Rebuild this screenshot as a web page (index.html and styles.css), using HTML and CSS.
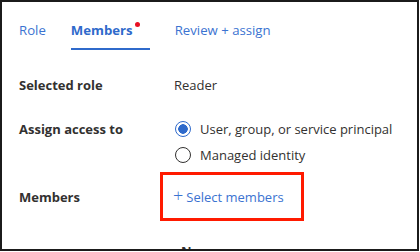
FILE: index.html
```html
<!DOCTYPE html>
<html>
<head>
    <title>Add role assignment</title>
    <link rel="stylesheet" href="styles.css">
</head>
<body>
    <div class="frame">
        <div class="tabs">
            <span class="tab">Role</span>
            <span class="tab active">Members<span class="dot"></span></span>
            <span class="tab">Review + assign</span>
        </div>

        <div class="form">
            <div class="row">
                <div class="label">Selected role</div>
                <div class="value">Reader</div>
            </div>

            <div class="row access">
                <div class="label">Assign access to</div>
                <div class="value options">
                    <label class="radio"><span class="circle checked"></span>User, group, or service principal</label>
                    <label class="radio"><span class="circle"></span>Managed identity</label>
                </div>
            </div>

            <div class="row members">
                <div class="label">Members</div>
                <div class="value">
                    <div class="highlight">
                        <span class="add"><span class="plus">+</span>Select members</span>
                    </div>
                </div>
            </div>
        </div>

        <div class="table-head">Name</div>
    </div>
</body>
</html>
```

FILE: styles.css
```css
body {
    margin: 0;
    font-family: "Open Sans", "Noto Sans", sans-serif;
    font-size: 13px;
    color: #323130;
    background: #fff;
}
.frame {
    width: 419px;
    height: 251px;
    box-sizing: border-box;
    border: 2px solid #1b1b1b;
    overflow: hidden;
    padding: 0 17px;
}
.tabs {
    display: flex;
    gap: 25px;
    padding-top: 19px;
    font-size: 13.2px;
}
.tab {
    color: #3b73d1;
    padding-bottom: 9px;
    position: relative;
}
.tab.active {
    font-weight: bold;
    color: #2f6acb;
    border-bottom: 2px solid #2f6acb;
    padding-right: 17px;
}
.dot {
    position: absolute;
    top: 1px;
    right: 10px;
    width: 5px;
    height: 5px;
    border-radius: 50%;
    background: #e81123;
}
.form {
    margin-top: 26px;
}
.row {
    display: grid;
    grid-template-columns: 155px 1fr;
    align-items: start;
}
.row.access {
    margin-top: 26px;
}
.row.members {
    margin-top: 8px;
    align-items: center;
}
.label {
    font-weight: bold;
}
.options {
    display: flex;
    flex-direction: column;
    gap: 8px;
}
.radio {
    display: flex;
    align-items: center;
    gap: 9px;
}
.circle {
    width: 16px;
    height: 16px;
    border: 1px solid #323130;
    border-radius: 50%;
    box-sizing: border-box;
    margin-left: 1px;
}
.circle.checked {
    border-color: #2f6acb;
    background: radial-gradient(circle, #2f6acb 0 4.5px, #fff 5px);
}
.highlight {
    display: inline-block;
    margin-left: -14px;
    border: 3px solid #ff1a00;
    padding: 11px 17px 12px 10px;
}
.add {
    color: #3b73d1;
}
.plus {
    font-size: 18px;
    font-weight: 300;
    margin-right: 3px;
    line-height: 1;
}
.table-head {
    margin-top: 21px;
    padding-left: 162px;
    font-weight: bold;
}
```
